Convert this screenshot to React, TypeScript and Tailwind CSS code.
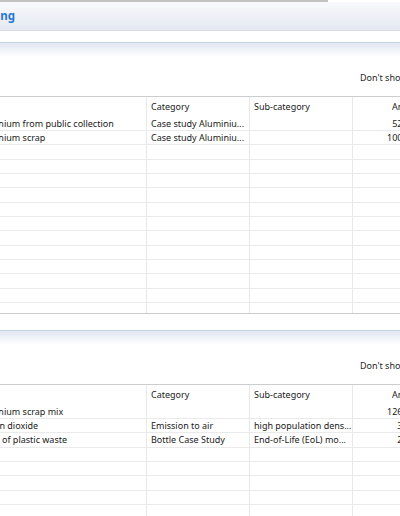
import type { ReactNode } from "react";

type Row = { name: string; cat: string; sub: string; amt: string };

const inputs: Row[] = [
  { name: "Aluminium from public collection", cat: "Case study Aluminiu...", sub: "", amt: "52.0" },
  { name: "Aluminium scrap", cat: "Case study Aluminiu...", sub: "", amt: "100.0" },
];

const outputs: Row[] = [
  { name: "Aluminium scrap mix", cat: "", sub: "", amt: "126.0" },
  { name: "Carbon dioxide", cat: "Emission to air", sub: "high population dens...", amt: "3.0" },
  { name: "Reuse of plastic waste", cat: "Bottle Case Study", sub: "End-of-Life (EoL) mo...", amt: "2.0" },
];

// row heights alternate so the grid lines land where the screenshot has them
const heights = ["h-[14px]", "h-[14px]", "h-[15px]"];

function Cell({ className, children }: { className: string; children?: ReactNode }) {
  return (
    <div className={`flex h-full shrink-0 items-center overflow-hidden whitespace-nowrap border-r border-[#e8e8e8] ${className}`}>
      {children}
    </div>
  );
}

function Table({ rows, count, height }: { rows: Row[]; count: number; height: string }) {
  const all: (Row | null)[] = [...rows];
  while (all.length < count) all.push(null);

  return (
    <div className={`overflow-hidden border-t border-[#cdcdcd] ${height}`}>
      <div className="flex h-[20px] text-[#1a1a1a]">
        <Cell className="w-[177px] pl-[4px]">Name</Cell>
        <Cell className="w-[103px] pl-[4px]">Category</Cell>
        <Cell className="w-[103px] pl-[4px]">Sub-category</Cell>
        <Cell className="w-[70px] pl-[39px]">Amount</Cell>
      </div>
      {all.map((r, i) => (
        <div key={i} className={`flex border-b border-[#eaeaea] text-[#1a1a1a] ${heights[i % 3]}`}>
          <Cell className="w-[177px] pl-[4px]">{r?.name}</Cell>
          <Cell className="w-[103px] pl-[4px]">{r?.cat}</Cell>
          <Cell className="w-[103px] pl-[4px]">{r?.sub}</Cell>
          <Cell className="w-[63px] justify-end pr-[5px]">{r?.amt}</Cell>
        </div>
      ))}
    </div>
  );
}

function Section({ rows, count, height, last }: { rows: Row[]; count: number; height: string; last?: boolean }) {
  return (
    <div className={last ? "" : "border-b border-[#cccccc]"}>
      <div className="h-[15px] border-t border-[#c5d2e2] bg-linear-to-b from-[#e0e7f1] to-white" />
      <div className="h-[39px] pt-[14px] pl-[390px] leading-[14px] text-[#262626] whitespace-nowrap">
        Don't show formulas
      </div>
      <Table rows={rows} count={count} height={height} />
    </div>
  );
}

export default function App() {
  return (
    <div
      className="relative h-[516px] w-[400px] overflow-hidden bg-white text-[9px]"
      style={{ fontFamily: '"Noto Sans", "Open Sans", sans-serif' }}
    >
      <div className="h-[2px] w-[328px] bg-[#c3c3c3]" />
      <div className="flex h-[29px] items-center border-b border-[#d5dce7] bg-linear-to-b from-[#f8f9fc] to-[#e4e9f2]">
        <div className="flex w-[15px] justify-end">
          <span className="shrink-0 whitespace-nowrap text-[11.5px] font-bold text-[#2a78cf]">Aluminium recycling</span>
        </div>
      </div>
      <div className="-ml-[30px] w-[470px] pt-[11px]">
        <Section rows={inputs} count={15} height="h-[217px]" />
        <div className="h-[16px]" />
        <Section rows={outputs} count={10} height="h-[200px]" last />
      </div>
    </div>
  );
}
